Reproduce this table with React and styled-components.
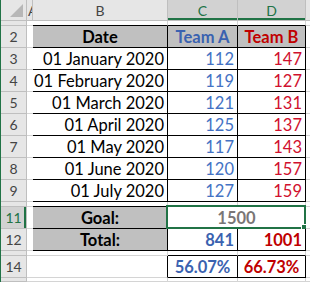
import React from "react";
import styled, { createGlobalStyle, css } from "styled-components";

const GRID = "#d4d4d4";
const INK = "#000";
const GREEN = "#217346";
const BLUE = "#4472c4";
const BLUE_B = "#3a62b0";
const RED = "#d0102e";
const RED_B = "#c00000";

const GlobalStyle = createGlobalStyle`
  html, body { margin: 0; padding: 0; background: #fff; overflow: hidden; }
`;

const Sheet = styled.div`
  display: grid;
  grid-template-columns: 26px 6px 135px 70px 68px 1fr;
  grid-template-rows: 21px 5px repeat(8, 22px) 5px 22px 22px 5px 22px 1fr;
  width: 309px;
  height: 282px;
  border-left: 1px solid ${GREEN};
  font-family: Lato, "Liberation Sans", sans-serif;
  background: #fff;
`;

const Corner = styled.div`
  background: #e6e6e6;
  border-right: 1px solid #bfbfbf;
  border-bottom: 1px solid #bfbfbf;
  display: flex;
  align-items: flex-end;
  justify-content: flex-end;
  padding: 0 3px 3px 0;
  box-sizing: border-box;
`;

const Triangle = styled.div`
  width: 0;
  height: 0;
  border-left: 13px solid transparent;
  border-bottom: 13px solid #b7b7b7;
`;

const ColHead = styled.div`
  box-sizing: border-box;
  background: ${(p) => (p.$sel ? "#d2d2d2" : "#e6e6e6")};
  color: ${(p) => (p.$sel ? GREEN : "#444")};
  border-right: 1px solid #bfbfbf;
  border-bottom: 1px solid #bfbfbf;
  ${(p) => p.$sel && css`box-shadow: inset 0 -2px 0 ${GREEN};`}
  font-size: 14px;
  display: flex;
  align-items: center;
  justify-content: ${(p) => (p.$left ? "flex-start" : "center")};
  padding-left: ${(p) => (p.$left ? "1px" : "0")};
  overflow: hidden;
  white-space: nowrap;
`;

const RowHead = styled.div`
  box-sizing: border-box;
  background: ${(p) => (p.$sel ? "#d2d2d2" : "#e6e6e6")};
  color: ${(p) => (p.$sel ? GREEN : "#444")};
  border-right: 1px solid #bfbfbf;
  border-bottom: 1px solid #bfbfbf;
  ${(p) => p.$sel && css`box-shadow: inset -2px 0 0 ${GREEN};`}
  font-size: 14px;
  display: flex;
  align-items: center;
  justify-content: center;
  overflow: hidden;
`;

const Cell = styled.div`
  position: relative;
  box-sizing: border-box;
  border-right: 1px solid ${(p) => (p.$r ? INK : GRID)};
  border-bottom: 1px solid ${(p) => (p.$b ? INK : GRID)};
  background: ${(p) => p.$bg || "#fff"};
  color: ${(p) => p.$color || "#000"};
  font-size: 16.5px;
  font-weight: ${(p) => (p.$bold ? 700 : 400)};
  display: flex;
  align-items: center;
  justify-content: ${(p) =>
    p.$align === "right" ? "flex-end" : p.$align === "left" ? "flex-start" : "center"};
  padding: 0 3px;
  white-space: nowrap;
  ${(p) => p.$span && css`grid-column: span ${p.$span};`}
`;

const Selection = styled.div`
  position: absolute;
  left: -2px;
  top: -2px;
  right: -1px;
  bottom: -1px;
  border: 2px solid ${GREEN};
  pointer-events: none;
`;

const Handle = styled.div`
  position: absolute;
  right: -4px;
  bottom: -4px;
  width: 5px;
  height: 5px;
  background: ${GREEN};
  border: 1px solid #fff;
`;

const rows = [
  ["01 January 2020", 112, 147],
  ["01 February 2020", 119, 127],
  ["01 March 2020", 121, 131],
  ["01 April 2020", 125, 137],
  ["01 May 2020", 117, 143],
  ["01 June 2020", 120, 157],
  ["01 July 2020", 127, 159],
];

function Spacer({ n, bottomB, bottomC }) {
  return (
    <>
      <RowHead>{n}</RowHead>
      <Cell />
      <Cell $b={bottomB} />
      <Cell $b={bottomC} />
      <Cell $b={bottomC} />
      <Cell />
    </>
  );
}

export default function App() {
  return (
    <>
      <GlobalStyle />
      <Sheet>
        <Corner>
          <Triangle />
        </Corner>
        <ColHead $left>A</ColHead>
        <ColHead>B</ColHead>
        <ColHead $sel>C</ColHead>
        <ColHead $sel>D</ColHead>
        <ColHead />

        <Spacer bottomB bottomC />

        <RowHead>2</RowHead>
        <Cell $r />
        <Cell $r $b $bg="#c0c0c0" $bold>Date</Cell>
        <Cell $r $b $bg="#c0c0c0" $bold $color={BLUE_B}>Team A</Cell>
        <Cell $r $b $bg="#c0c0c0" $bold $color={RED_B}>Team B</Cell>
        <Cell />

        {rows.map(([d, a, b], i) => (
          <React.Fragment key={d}>
            <RowHead>{i + 3}</RowHead>
            <Cell $r />
            <Cell $r $b $align="right">{d}</Cell>
            <Cell $r $b $align="right" $color={BLUE}>{a}</Cell>
            <Cell $r $b $align="right" $color={RED}>{b}</Cell>
            <Cell />
          </React.Fragment>
        ))}

        <Spacer bottomB bottomC />

        <RowHead $sel>11</RowHead>
        <Cell $r />
        <Cell $r $b $bg="#c0c0c0" $bold>Goal:</Cell>
        <Cell $r $b $span={2} $bold $color="#7a7676">
          1500
          <Selection>
            <Handle />
          </Selection>
        </Cell>
        <Cell />

        <RowHead>12</RowHead>
        <Cell $r />
        <Cell $r $b $bg="#c0c0c0" $bold>Total:</Cell>
        <Cell $r $b $align="right" $bold $color={BLUE_B}>841</Cell>
        <Cell $r $b $align="right" $bold $color={RED_B}>1001</Cell>
        <Cell />

        <Spacer bottomC />

        <RowHead>14</RowHead>
        <Cell />
        <Cell $r />
        <Cell $r $b $bold $color={BLUE_B}>56.07%</Cell>
        <Cell $r $b $bold $color={RED_B}>66.73%</Cell>
        <Cell />

        <RowHead />
        <Cell />
        <Cell />
        <Cell />
        <Cell />
        <Cell />
      </Sheet>
    </>
  );
}
